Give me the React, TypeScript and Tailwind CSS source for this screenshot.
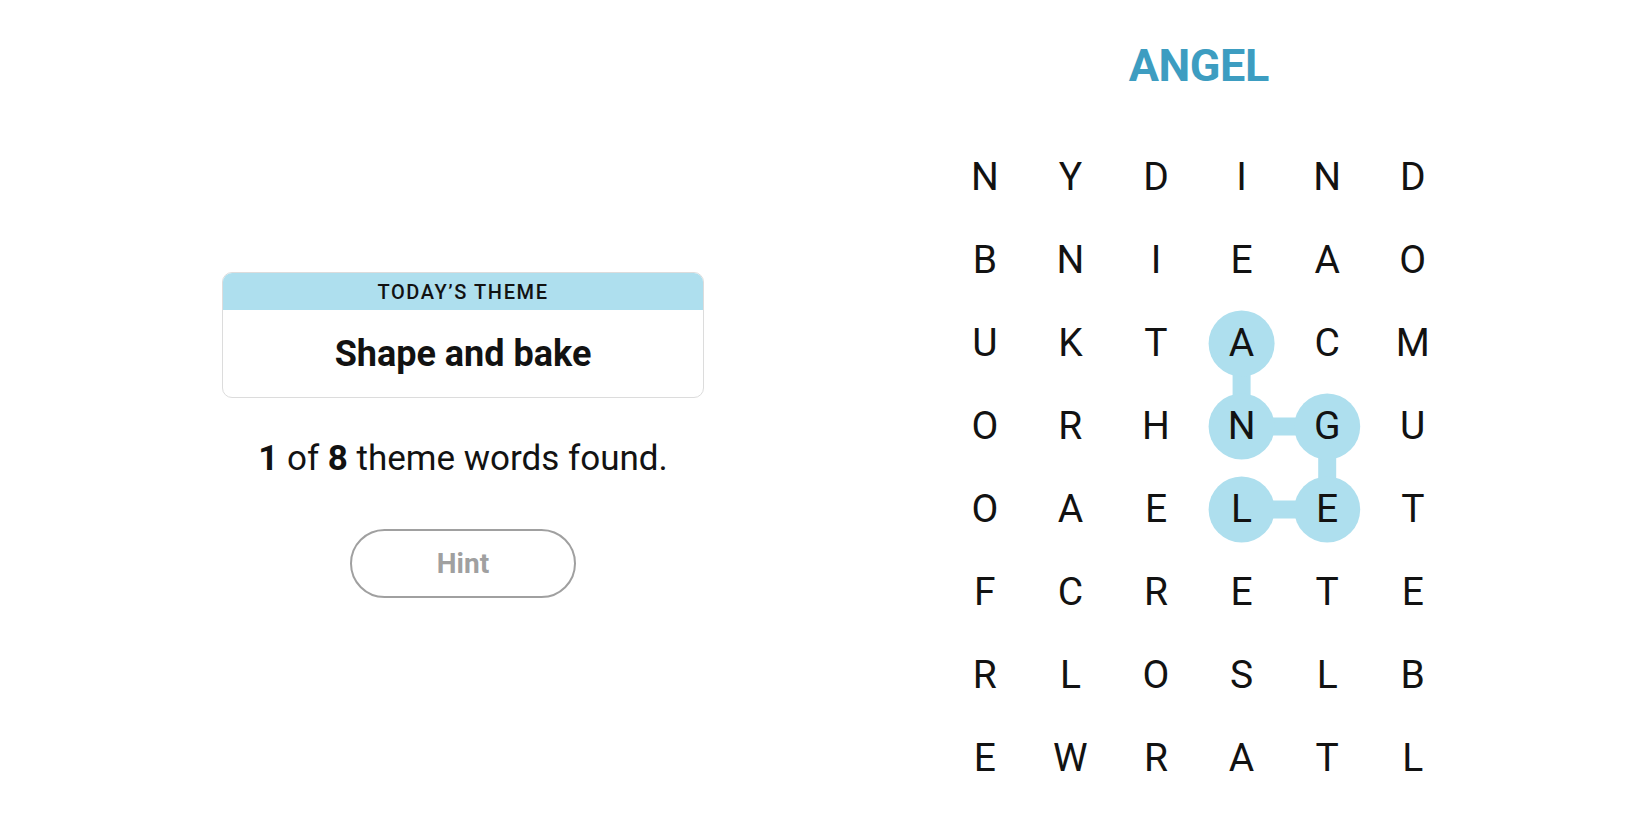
const GRID = [
  "NYDIND",
  "BNIEAO",
  "UKTACM",
  "ORHNGU",
  "OAELET",
  "FCRETE",
  "RLOSLB",
  "EWRATL",
];

const COL_W = 85.6;
const ROW_H = 83;

// path of the found word, in order: A N G E L
const FOUND: [number, number][] = [
  [2, 3],
  [3, 3],
  [3, 4],
  [4, 4],
  [4, 3],
];

const center = ([r, c]: [number, number]) => ({
  x: COL_W / 2 + c * COL_W,
  y: ROW_H / 2 + r * ROW_H,
});

function ThemeCard() {
  return (
    <div className="overflow-hidden rounded-[10px] border border-[#dcdcdc] bg-white">
      <div className="flex h-[37px] items-center justify-center bg-[#aedfee] text-[20px] font-medium tracking-[0.08em] text-[#121212]">
        TODAY’S THEME
      </div>
      <div className="flex h-[87px] items-center justify-center text-[36px] font-bold text-[#121212]">
        Shape and bake
      </div>
    </div>
  );
}

function Board() {
  const pts = FOUND.map(center);
  return (
    <div className="relative">
      <svg
        className="absolute inset-0"
        width={COL_W * 6}
        height={ROW_H * 8}
        aria-hidden
      >
        {pts.slice(1).map((p, i) => (
          <line
            key={i}
            x1={pts[i].x}
            y1={pts[i].y}
            x2={p.x}
            y2={p.y}
            stroke="#aedfee"
            strokeWidth={18}
          />
        ))}
        {pts.map((p, i) => (
          <circle key={i} cx={p.x} cy={p.y} r={33} fill="#aedfee" />
        ))}
      </svg>
      <div className="relative grid grid-cols-[repeat(6,85.6px)] grid-rows-[repeat(8,83px)]">
        {GRID.flatMap((row, r) =>
          row.split("").map((ch, c) => (
            <div
              key={`${r}-${c}`}
              className="flex items-center justify-center text-[39px] font-normal text-[#121212]"
            >
              {ch}
            </div>
          ))
        )}
      </div>
    </div>
  );
}

export default function App() {
  return (
    <div className="flex h-[825px] w-[1650px] bg-white font-['Roboto',sans-serif]">
      <div className="ml-[222px] mt-[272px] flex w-[482px] flex-col items-center">
        <div className="w-full">
          <ThemeCard />
        </div>
        <p className="mt-[43px] text-[35px] leading-none text-[#121212]">
          <span className="font-bold">1</span> of{" "}
          <span className="font-bold">8</span> theme words found.
        </p>
        <button className="mt-[53px] h-[69px] w-[226px] rounded-full border-2 border-[#a0a0a0] text-[28px] font-bold text-[#a0a0a0]">
          Hint
        </button>
      </div>
      <div className="ml-[238px] flex flex-col items-center">
        <h1 className="mt-[43px] text-[45px] font-bold leading-none tracking-[-0.01em] text-[#3d9dc1]">
          ANGEL
        </h1>
        <div className="mt-[48px]">
          <Board />
        </div>
      </div>
    </div>
  );
}
